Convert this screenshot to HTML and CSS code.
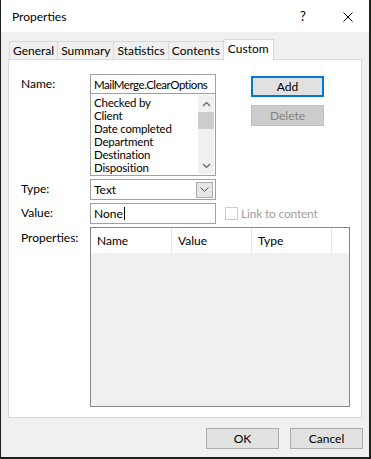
FILE: index.html
```html
<!DOCTYPE html>
<html lang="en">
<head>
    <meta charset="UTF-8">
    <title>Properties</title>
    <link rel="stylesheet" href="styles.css">
</head>
<body>
    <div class="window">
        <div class="titlebar">
            <span class="title">Properties</span>
            <span class="help">?</span>
            <span class="close">
                <svg width="10" height="10" viewBox="0 0 10 10"><path d="M0.5 0.5L9.5 9.5M9.5 0.5L0.5 9.5" stroke="#000" stroke-width="1" fill="none"/></svg>
            </span>
        </div>
        <div class="tabs">
            <div class="tab">General</div>
            <div class="tab">Summary</div>
            <div class="tab">Statistics</div>
            <div class="tab">Contents</div>
            <div class="tab active">Custom</div>
        </div>
        <div class="panel">
            <div class="row name-row">
                <span class="label">Name:</span>
                <div class="name-col">
                    <div class="textbox name-box">MailMerge.ClearOptions</div>
                    <div class="listbox">
                        <ul class="items">
                            <li>Checked by</li>
                            <li>Client</li>
                            <li>Date completed</li>
                            <li>Department</li>
                            <li>Destination</li>
                            <li>Disposition</li>
                        </ul>
                        <div class="scrollbar">
                            <span class="arrow">
                                <svg width="9" height="6" viewBox="0 0 9 6"><path d="M1 5L4.5 1.5L8 5" stroke="#606060" stroke-width="1.2" fill="none"/></svg>
                            </span>
                            <span class="thumb"></span>
                            <span class="track"></span>
                            <span class="arrow">
                                <svg width="9" height="6" viewBox="0 0 9 6"><path d="M1 1L4.5 4.5L8 1" stroke="#606060" stroke-width="1.2" fill="none"/></svg>
                            </span>
                        </div>
                    </div>
                </div>
                <div class="actions">
                    <button class="btn default">Add</button>
                    <button class="btn" disabled>Delete</button>
                </div>
            </div>
            <div class="row">
                <span class="label">Type:</span>
                <div class="combo">
                    <span class="combo-text">Text</span>
                    <span class="drop">
                        <svg width="9" height="5" viewBox="0 0 9 5"><path d="M0.5 0.5L4.5 4.5L8.5 0.5" stroke="#505050" stroke-width="1" fill="none"/></svg>
                    </span>
                </div>
            </div>
            <div class="row">
                <span class="label">Value:</span>
                <div class="textbox">None<span class="caret"></span></div>
                <span class="check"><span class="box"></span>Link to content</span>
            </div>
            <div class="row">
                <span class="label props-label">Properties:</span>
                <div class="listview">
                    <div class="lv-head">
                        <span class="col">Name</span>
                        <span class="col">Value</span>
                        <span class="col">Type</span>
                        <span class="col filler"></span>
                    </div>
                    <div class="lv-body"></div>
                </div>
            </div>
        </div>
        <div class="footer">
            <button class="btn">OK</button>
            <button class="btn">Cancel</button>
        </div>
    </div>
</body>
</html>
```

FILE: styles.css
```css
body {
    margin: 0;
    font-family: "Segoe UI", Lato, "Noto Sans", sans-serif;
    font-size: 12px;
    color: #000;
    background: #1f1f1f;
}
.window {
    width: 368px;
    height: 457px;
    border-left: 1px solid #1f1f1f;
    border-right: 2px solid #1f1f1f;
    border-bottom: 2px solid #1f1f1f;
    background: #f0f0f0;
    display: flex;
    flex-direction: column;
}
.titlebar {
    height: 32px;
    background: #fff;
    display: flex;
    align-items: center;
    padding-left: 11px;
}
.title {
    flex: 1;
}
.help {
    width: 7px;
    margin-right: 36px;
    font-size: 13px;
}
.close {
    display: flex;
    margin-right: 16px;
    margin-top: 1px;
}
.tabs {
    height: 27px;
    display: flex;
    align-items: flex-end;
    padding-left: 8px;
}
.tab {
    height: 17px;
    line-height: 17px;
    padding: 0 3px;
    border: 1px solid #d9d9d9;
    border-bottom: none;
    border-right: none;
    background: #f0f0f0;
}
.tab.active {
    height: 20px;
    line-height: 18px;
    background: #fff;
    border-right: 1px solid #d9d9d9;
    margin-bottom: -1px;
    position: relative;
    z-index: 1;
    padding: 0 4px;
}
.panel {
    margin-left: 7px;
    width: 354px;
    height: 359px;
    box-sizing: border-box;
    background: #fff;
    border: 1px solid #d9d9d9;
    padding: 14px 0 0 12px;
}
.row {
    display: flex;
    margin-bottom: 3px;
}
.label {
    width: 69px;
    flex-shrink: 0;
    line-height: 20px;
}
.props-label {
    padding-top: 1px;
}
.name-col {
    width: 126px;
}
.textbox {
    width: 126px;
    height: 21px;
    box-sizing: border-box;
    border: 1px solid #a0a0a0;
    padding: 0 3px;
    background: #fff;
    display: flex;
    align-items: center;
    white-space: nowrap;
    overflow: hidden;
}
.name-box {
    height: 20px;
    font-size: 11.5px;
    letter-spacing: -0.45px;
}
.caret {
    width: 1px;
    height: 13px;
    background: #000;
    margin-left: 1px;
}
.listbox {
    margin-top: -1px;
    height: 83px;
    box-sizing: border-box;
    border: 1px solid #a0a0a0;
    display: flex;
    padding: 1px;
}
.items {
    flex: 1;
    list-style: none;
    margin: 0;
    padding: 1px 0 0 2px;
    font-size: 11.5px;
    letter-spacing: -0.2px;
}
.items li {
    height: 13px;
    line-height: 13px;
}
.scrollbar {
    width: 16px;
    background: #f0f0f0;
    display: flex;
    flex-direction: column;
}
.arrow {
    height: 17px;
    display: flex;
    align-items: center;
    justify-content: center;
}
.thumb {
    height: 17px;
    background: #cdcdcd;
}
.track {
    flex: 1;
}
.actions {
    margin-left: 35px;
    margin-top: 2px;
    display: flex;
    flex-direction: column;
    gap: 8px;
}
.btn {
    width: 73px;
    height: 21px;
    box-sizing: border-box;
    border: 1px solid #adadad;
    background: #e1e1e1;
    font-family: inherit;
    font-size: 12px;
    color: #000;
    padding: 0;
}
.btn.default {
    border: 2px solid #0078d7;
}
.btn:disabled {
    background: #cccccc;
    border-color: #bfbfbf;
    color: #838383;
}
.combo {
    width: 126px;
    height: 21px;
    box-sizing: border-box;
    border: 1px solid #a0a0a0;
    background: #fff;
    display: flex;
    align-items: center;
    padding: 0 2px 0 3px;
}
.combo-text {
    flex: 1;
}
.drop {
    width: 17px;
    height: 16px;
    box-sizing: border-box;
    border: 1px solid #acacac;
    background: #e5e5e5;
    display: flex;
    align-items: center;
    justify-content: center;
}
.check {
    margin-left: 9px;
    display: flex;
    align-items: center;
    color: #a0a0a0;
    letter-spacing: -0.2px;
}
.box {
    width: 13px;
    height: 13px;
    box-sizing: border-box;
    border: 1px solid #cccccc;
    background: #fff;
    margin-right: 3px;
}
.listview {
    width: 260px;
    height: 180px;
    box-sizing: border-box;
    border: 1px solid #828790;
    display: flex;
    flex-direction: column;
    background: #f0f0f0;
}
.lv-head {
    height: 25px;
    display: flex;
    background: #fff;
}
.col {
    width: 80px;
    border-right: 1px solid #e5e5e5;
    padding-left: 6px;
    box-sizing: border-box;
    line-height: 25px;
}
.col:first-child {
    width: 81px;
}
.col.filler {
    flex: 1;
    border-right: none;
}
.lv-body {
    flex: 1;
}
.footer {
    flex: 1;
    display: flex;
    justify-content: flex-end;
    align-items: flex-start;
    padding: 10px 6px 0 0;
    gap: 11px;
}
```
